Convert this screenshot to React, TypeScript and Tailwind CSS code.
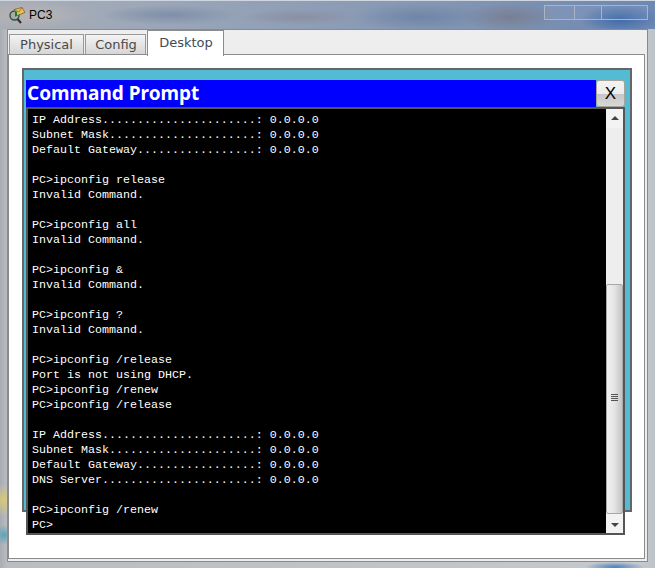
const lines = [
  "IP Address......................: 0.0.0.0",
  "Subnet Mask.....................: 0.0.0.0",
  "Default Gateway.................: 0.0.0.0",
  "",
  "PC>ipconfig release",
  "Invalid Command.",
  "",
  "PC>ipconfig all",
  "Invalid Command.",
  "",
  "PC>ipconfig &",
  "Invalid Command.",
  "",
  "PC>ipconfig ?",
  "Invalid Command.",
  "",
  "PC>ipconfig /release",
  "Port is not using DHCP.",
  "PC>ipconfig /renew",
  "PC>ipconfig /release",
  "",
  "IP Address......................: 0.0.0.0",
  "Subnet Mask.....................: 0.0.0.0",
  "Default Gateway.................: 0.0.0.0",
  "DNS Server......................: 0.0.0.0",
  "",
  "PC>ipconfig /renew",
  "PC>",
];

function PcIcon() {
  return (
    <svg width="18" height="18" viewBox="0 0 18 18" className="flex-none">
      <circle cx="6.5" cy="9.5" r="4.5" fill="#9fb0a8" stroke="#3f4a44" strokeWidth="1.4" />
      <path d="M9.5 13l3.5 4" stroke="#2c332f" strokeWidth="2" />
      <path d="M6 3.5l8-2 3 5-8 3z" fill="#e8c15a" stroke="#7a6224" strokeWidth="0.8" />
      <path d="M6 3.5l5 2.5 3-4.500" fill="none" stroke="#8a6f2a" strokeWidth="0.8" />
      <path d="M7 5l2 0.800 0 4-2 1z" fill="#1d7a35" />
    </svg>
  );
}

function Tab({ label, active, width }: { label: string; active?: boolean; width: string }) {
  if (active) {
    return (
      <div className={`${width} relative z-10 flex h-[26px] items-start justify-center border border-b-0 border-[#8c8c8c] bg-white pl-[1px] pt-[3px] font-['DejaVu_Sans'] text-[13px] leading-[18px] text-[#444a55]`}>
        {label}
      </div>
    );
  }
  return (
    <div className={`${width} mt-[4px] flex h-[21px] items-center justify-center border border-[#9a9a9a] bg-gradient-to-b from-[#f4f4f4] to-[#d6d6d6] font-['DejaVu_Sans'] text-[13px] leading-[18px] text-[#4a4a4a]`}>
      {label}
    </div>
  );
}

function Scrollbar() {
  return (
    <div className="flex w-[17px] flex-none flex-col bg-[#f0f0f0]">
      <div className="flex h-[19px] flex-none items-center justify-center bg-[#f3f3f3]">
        <div className="mt-[-1px] h-0 w-0 border-x-[4px] border-b-[4px] border-x-transparent border-b-[#444]" />
      </div>
      <div className="h-[156px] flex-none bg-[#eeeeee]" />
      <div className="flex h-[230px] flex-none items-center justify-center rounded-[2px] border border-[#a8a8a8] bg-gradient-to-r from-[#f2f2f2] via-[#e4e4e4] to-[#c4c4c8]">
        <div className="mt-[-4px] flex w-[7px] flex-col gap-[1px]">
          <div className="h-px bg-[#555]" />
          <div className="h-px bg-[#555]" />
          <div className="h-px bg-[#555]" />
          <div className="h-px bg-[#555]" />
        </div>
      </div>
      <div className="flex flex-1 items-center justify-center bg-[#f3f3f3]">
        <div className="mt-[2px] h-0 w-0 border-x-[4px] border-t-[4px] border-x-transparent border-t-[#444]" />
      </div>
    </div>
  );
}

export default function App() {
  return (
    <div className="relative h-[568px] w-[655px] overflow-hidden bg-[radial-gradient(circle_at_4px_500px,#d8c878_0,transparent_16px),radial-gradient(circle_at_4px_535px,#5ba4b8_0,transparent_10px),radial-gradient(ellipse_30px_5px_at_615px_567px,#4a80c0_0,transparent_100%),linear-gradient(90deg,#a8adb3_0px,#b9bdc1_7px,#c4c9ce_640px,#bcc3c9_655px)]">
      <div className="flex h-[29px] items-center border-t border-[#cfd6df] bg-[radial-gradient(ellipse_60px_14px_at_30px_14px,#b8b4b4_0,transparent_100%),radial-gradient(ellipse_70px_10px_at_170px_14px,#7f8fa8_0,transparent_100%),radial-gradient(ellipse_60px_8px_at_300px_16px,#8b8fa2_0,transparent_100%),radial-gradient(ellipse_70px_14px_at_420px_16px,#6f86a8_0,transparent_100%),radial-gradient(ellipse_50px_14px_at_510px_16px,#7a7f92_0,transparent_100%),radial-gradient(ellipse_40px_14px_at_620px_18px,#3f6aa8_0,transparent_100%),linear-gradient(90deg,#a9aeb5_0%,#9aa6b8_25%,#8d9db5_50%,#7f93b2_75%,#6d88b4_100%)] pl-[8px] font-['Liberation_Sans'] text-[12px] text-black">
        <PcIcon />
        <span className="ml-[3px] text-[12px]">PC3</span>
        <div className="ml-auto mr-[7px] mt-[-6px] flex h-[15px] w-[104px] border border-[#a9b4c6] bg-white/5">
          <div className="h-full w-[30px] border-r border-[#a9b4c6]" />
          <div className="h-full w-[27px] border-r border-[#a9b4c6]" />
        </div>
      </div>

      <div className="ml-[7px] flex h-[533px] w-[641px] flex-col border border-[#8a8a8a] bg-[#eeeeee]">
        <div className="flex h-[24px] flex-none items-start gap-[1px] pl-[1px]">
          <Tab label="Physical" width="w-[75px]" />
          <Tab label="Config" width="w-[61px] pl-[1px]" />
          <Tab label="Desktop" active width="w-[77px]" />
        </div>
        <div className="mr-[2px] flex h-[505px] flex-none flex-col border border-[#8c8c8c] bg-white pl-[13px] pt-[13px]">
          <div className="h-[444px] w-[610px] flex-none border-2 border-[#666666] bg-[#54bbd4] pl-[2px] pt-[10px]">
            <div className="flex h-[27px] w-[599px]">
              <div className="flex w-[570px] items-center bg-[#0000ff] pl-[1px] font-['Noto_Sans'] text-[19px] font-bold leading-[27px] text-white">
                Command Prompt
              </div>
              <div className="flex h-[27px] w-[29px] flex-none items-center justify-center rounded-[3px] border border-[#a8a498] bg-[linear-gradient(180deg,#f3f3f3_0%,#ededed_50%,#c6c6c6_52%,#d8d8d8_100%)] font-['Liberation_Sans'] text-[17px] text-black">
                X
              </div>
            </div>
            <div className="flex h-[428px] w-[599px] border-2 border-[#555555] bg-black">
              <div className="min-w-0 flex-1 whitespace-pre pl-[4px] pt-[4px] font-['Liberation_Mono'] text-[11.67px] leading-[15px] text-white">
                {lines.map((l, i) => (
                  <div key={i} className="h-[15px]">{l}</div>
                ))}
              </div>
              <Scrollbar />
            </div>
          </div>
        </div>
      </div>
    </div>
  );
}
